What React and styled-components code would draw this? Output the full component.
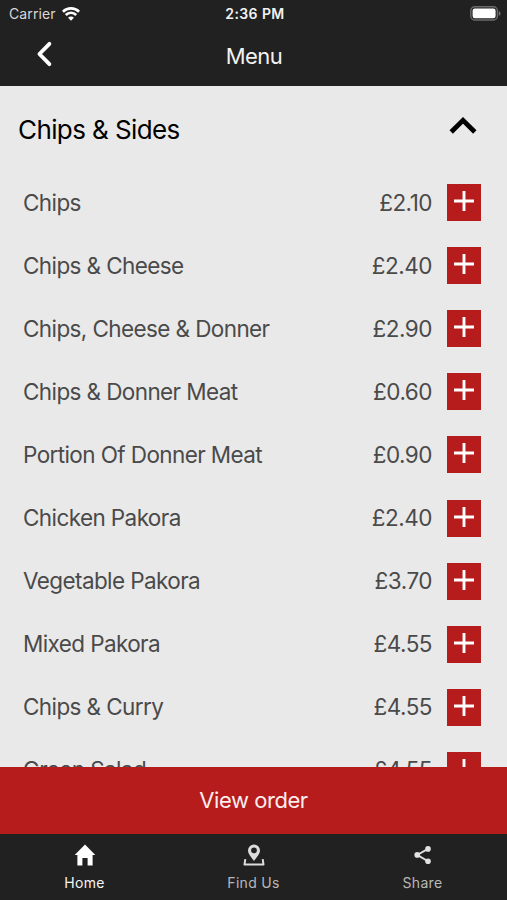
import styled, { createGlobalStyle } from "styled-components";
import { useState } from "react";

const items = [
    { name: "Chips", price: "£2.10" },
    { name: "Chips & Cheese", price: "£2.40" },
    { name: "Chips, Cheese & Donner", price: "£2.90" },
    { name: "Chips & Donner Meat", price: "£0.60" },
    { name: "Portion Of Donner Meat", price: "£0.90" },
    { name: "Chicken Pakora", price: "£2.40" },
    { name: "Vegetable Pakora", price: "£3.70" },
    { name: "Mixed Pakora", price: "£4.55" },
    { name: "Chips & Curry", price: "£4.55" },
    { name: "Green Salad", price: "£4.55" },
];

function WifiIcon() {
    return (
        <svg width="18" height="14" viewBox="0 0 18 14" fill="none" stroke="#fff" strokeWidth="2.6">
            <path d="M0.9 4.7a11.6 11.6 0 0 1 16.2 0" />
            <path d="M3.8 8a7.3 7.3 0 0 1 10.4 0" />
            <path d="M9 13.8 6.1 10.8a4 4 0 0 1 5.8 0z" fill="#fff" stroke="none" />
        </svg>
    );
}

function BatteryIcon() {
    return (
        <svg width="31" height="15" viewBox="0 0 31 15">
            <rect x="0.8" y="0.8" width="26.6" height="13.2" rx="4" fill="none" stroke="#6b6b6b" strokeWidth="1.4" />
            <rect x="2.6" y="2.6" width="23" height="9.6" rx="2.2" fill="#fff" />
            <path d="M28.8 5v5c1.1-.4 1.7-1.4 1.7-2.5S29.9 5.4 28.8 5z" fill="#777" />
        </svg>
    );
}

function HomeIcon() {
    return (
        <svg width="22" height="22" viewBox="0 0 22 22">
            <path d="M11 0.6 21.3 11h-2.7v10.5h-5v-7.6H8.4v7.6h-5V11H0.7z" fill="#fff" />
        </svg>
    );
}

function FindUsIcon() {
    return (
        <svg width="22" height="22" viewBox="0 0 22 22" fill="#dcdcdc">
            <path
                fillRule="evenodd"
                d="M11 17C8.2 12.8 5 9.900 5 6.400a6 6 0 0 1 12 0c0 3.500-3.200 6.400-6 10.600zM11 3.400a2.900 2.900 0 1 0 0 5.800 2.900 2.900 0 0 0 0-5.800z"
            />
            <path d="M2.300 15.200 1.500 20.600h19L19.700 15.200" fill="none" stroke="#dcdcdc" strokeWidth="2" strokeLinejoin="round" />
        </svg>
    );
}

function ShareIcon() {
    return (
        <svg width="22" height="22" viewBox="0 0 22 22" fill="#e2e2e2">
            <path d="M16 4.9 5.2 10.9 16 17.2" fill="none" stroke="#e2e2e2" strokeWidth="1.8" />
            <circle cx="16" cy="4.9" r="2.8" />
            <circle cx="5.2" cy="10.9" r="2.8" />
            <circle cx="16" cy="17.2" r="2.8" />
        </svg>
    );
}

function App() {
    const [open, setOpen] = useState(true);
    const [tab, setTab] = useState("Home");

    return (
        <>
            <GlobalStyle />
            <Screen>
                <StatusBar>
                    <Carrier>
                        Carrier
                        <WifiIcon />
                    </Carrier>
                    <Time>2:36 PM</Time>
                    <Battery>
                        <BatteryIcon />
                    </Battery>
                </StatusBar>
                <Header>
                    <BackBtn aria-label="Back">
                        <svg width="18" height="28" viewBox="0 0 18 28" fill="none" stroke="#fff" strokeWidth="3.8">
                            <path d="M14.4 3.8 4.4 14l10 10.2" strokeLinecap="round" strokeLinejoin="round" />
                        </svg>
                    </BackBtn>
                    <Title>Menu</Title>
                </Header>
                <Content>
                    <SectionHeader onClick={() => setOpen(!open)}>
                        <SectionTitle>Chips &amp; Sides</SectionTitle>
                        <Chevron $open={open} width="28" height="18" viewBox="0 0 28 18">
                            <path d="M2.2 15 14 3.4 25.8 15" fill="none" stroke="#000" strokeWidth="4.8" />
                        </Chevron>
                    </SectionHeader>
                    {open &&
                        items.map((item) => (
                            <Row key={item.name}>
                                <Name>{item.name}</Name>
                                <Price>{item.price}</Price>
                                <AddBtn aria-label="Add">
                                    <svg width="20" height="20" viewBox="0 0 20 20">
                                        <path d="M10 0v20M0 10h20" stroke="#fff" strokeWidth="2.9" />
                                    </svg>
                                </AddBtn>
                            </Row>
                        ))}
                </Content>
                <OrderBtn>View order</OrderBtn>
                <TabBar>
                    <Tab $active={tab === "Home"} onClick={() => setTab("Home")}>
                        <HomeIcon />
                        Home
                    </Tab>
                    <Tab $active={tab === "Find Us"} onClick={() => setTab("Find Us")}>
                        <FindUsIcon />
                        Find Us
                    </Tab>
                    <Tab $active={tab === "Share"} onClick={() => setTab("Share")}>
                        <ShareIcon />
                        Share
                    </Tab>
                </TabBar>
            </Screen>
        </>
    );
}

export default App;

const GlobalStyle = createGlobalStyle`
    * {
        box-sizing: border-box;
    }

    body {
        margin: 0;
        font-family: Inter, "Liberation Sans", sans-serif;
    }

    button {
        border: none;
        padding: 0;
        font-family: inherit;
        cursor: pointer;
    }

    svg {
        display: block;
    }
`;

const Screen = styled.div`
    display: flex;
    flex-direction: column;
    height: 900px;
    overflow: hidden;
    background-color: #e9e9e9;
`;

const StatusBar = styled.div`
    display: grid;
    grid-template-columns: 1fr auto 1fr;
    align-items: center;
    flex: none;
    height: 27px;
    padding: 0 6px 0 9px;
    background-color: #212121;
    color: #fff;
`;

const Carrier = styled.div`
    display: flex;
    align-items: center;
    gap: 6px;
    font-size: 14px;
    letter-spacing: 0.1px;
    color: #d8d8d8;
`;

const Time = styled.div`
    font-size: 14px;
    font-weight: 600;
    letter-spacing: 0.4px;
    color: #f2f2f2;
`;

const Battery = styled.div`
    justify-self: end;
`;

const Header = styled.header`
    display: grid;
    grid-template-columns: 90px 1fr 90px;
    align-items: center;
    flex: none;
    height: 59px;
    padding-bottom: 3px;
    background-color: #212121;
`;

const BackBtn = styled.button`
    display: flex;
    padding: 0 0 2px 35px;
    background: none;
`;

const Title = styled.h1`
    margin: 0;
    padding: 2px 0 0 1px;
    font-size: 22px;
    font-weight: 400;
    letter-spacing: -0.5px;
    text-align: center;
    color: #f2f2f2;
`;

const Content = styled.main`
    flex: 1;
    min-height: 0;
    overflow: hidden;
`;

const SectionHeader = styled.div`
    display: flex;
    justify-content: space-between;
    align-items: center;
    height: 85px;
    padding: 0 30px 0 18px;
    cursor: pointer;
`;

const SectionTitle = styled.h2`
    margin: 0;
    padding-top: 1px;
    font-size: 26px;
    font-weight: 400;
    letter-spacing: -0.6px;
    color: #000;
`;

const Chevron = styled.svg`
    margin-bottom: 5px;
    transform: ${({ $open }) => ($open ? "none" : "rotate(180deg)")};
`;

const Row = styled.div`
    display: flex;
    align-items: center;
    height: 63.1px;
    padding: 0 26px 0 23px;
    font-size: 22.5px;
    color: #4a4a4a;
`;

const Name = styled.span`
    flex: 1;
    padding-bottom: 1px;
    letter-spacing: -0.6px;
`;

const Price = styled.span`
    margin-right: 15px;
    padding-bottom: 1px;
    letter-spacing: -0.5px;
`;

const AddBtn = styled.button`
    display: flex;
    justify-content: center;
    align-items: center;
    width: 34px;
    height: 37px;
    padding-bottom: 3px;
    background-color: #b71c1c;
`;

const OrderBtn = styled.button`
    flex: none;
    height: 67px;
    padding-bottom: 1px;
    background-color: #b71c1c;
    font-size: 22px;
    letter-spacing: -0.45px;
    color: #fbeeee;
`;

const TabBar = styled.nav`
    display: grid;
    grid-template-columns: repeat(3, 1fr);
    flex: none;
    height: 66px;
    background-color: #212121;
`;

const Tab = styled.button`
    display: flex;
    flex-direction: column;
    align-items: center;
    gap: 8px;
    padding-top: 10px;
    background: none;
    font-size: 14px;
    line-height: 17px;
    letter-spacing: 0.3px;
    color: ${({ $active }) => ($active ? "#f5f5f5" : "#b8b8b8")};
`;
